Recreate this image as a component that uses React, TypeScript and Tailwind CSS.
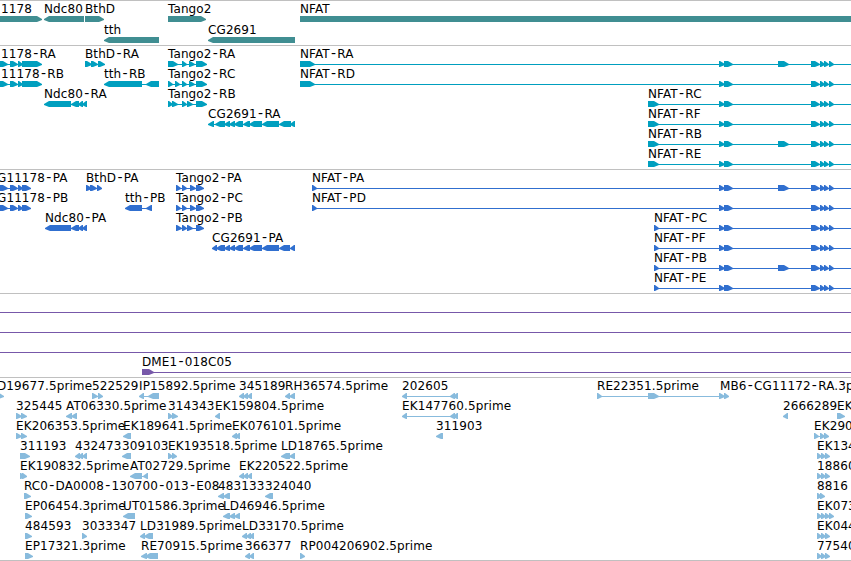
type Strand = "f" | "r";
type Seg = [number, number];

type Feature = {
    row: number,
    strand?: Strand,
    label?: string,
    x: number,
    segs?: Seg[],
    // connecting intron line, from / to
    line?: Seg,
};

const WIDTH = 851;

const nfat: Seg[] = [[719, 725], [724, 733], [811, 820], [820, 825], [824, 829], [829, 834]];
const nfatLong: Seg[] = [...nfat, [778, 789]];
const triple: Seg[] = [[817, 822], [821, 826], [825, 830]];

const genes: Feature[] = [
    { row: 0, label: "1178", x: 1, segs: [[-20, 42]] },
    { row: 0, strand: "r", label: "Ndc80", x: 44, segs: [[44, 84]] },
    { row: 0, label: "BthD", x: 85, segs: [[85, 104]] },
    { row: 1, strand: "r", label: "tth", x: 104, segs: [[104, 159]] },
    { row: 0, label: "Tango2", x: 168, segs: [[168, 206]] },
    { row: 1, strand: "r", label: "CG2691", x: 208, segs: [[208, 295]] },
    { row: 0, label: "NFAT", x: 300, segs: [[300, 870]] },
];

const transcripts: Feature[] = [
    { row: 0, label: "1178-RA", x: 1, segs: [[-4, 8], [10, 18], [18, 23], [22, 42]], line: [0, 42] },
    { row: 1, label: "11178-RB", x: 1, segs: [[-4, 8], [10, 18], [18, 23], [22, 42]], line: [0, 42] },
    { row: 2, strand: "r", label: "Ndc80-RA", x: 44, segs: [[44, 71], [71, 79], [78, 83], [82, 87]] },
    { row: 0, label: "BthD-RA", x: 85, segs: [[85, 92], [91, 98], [98, 105]], line: [85, 105] },
    { row: 1, strand: "r", label: "tth-RB", x: 104, segs: [[104, 142], [146, 159]], line: [104, 159] },
    { row: 0, label: "Tango2-RA", x: 168, segs: [[168, 178], [182, 187], [189, 195], [196, 207]], line: [168, 207] },
    { row: 1, label: "Tango2-RC", x: 168, segs: [[168, 173], [175, 180], [182, 187], [189, 195], [196, 207]], line: [168, 207] },
    { row: 2, label: "Tango2-RB", x: 168, segs: [[168, 173], [172, 178], [182, 187], [187, 193], [196, 207]], line: [168, 207] },
    { row: 3, strand: "r", label: "CG2691-RA", x: 208, segs: [[208, 214], [215, 225], [224, 230], [229, 235], [234, 243], [243, 250], [249, 262], [262, 279], [279, 291], [290, 295]], line: [208, 295] },
    { row: 0, label: "NFAT-RA", x: 300, segs: [[300, 315], ...nfatLong], line: [300, WIDTH] },
    { row: 1, label: "NFAT-RD", x: 300, segs: [[300, 315], ...nfat], line: [300, WIDTH] },
    { row: 2, label: "NFAT-RC", x: 648, segs: [[648, 659], ...nfat], line: [648, WIDTH] },
    { row: 3, label: "NFAT-RF", x: 648, segs: [[648, 659], ...nfat], line: [648, WIDTH] },
    { row: 4, label: "NFAT-RB", x: 648, segs: [[648, 659], ...nfatLong], line: [648, WIDTH] },
    { row: 5, label: "NFAT-RE", x: 648, segs: [[648, 659], ...nfat], line: [648, WIDTH] },
];

const proteins: Feature[] = [
    { row: 0, label: "G11178-PA", x: -3, segs: [[-4, 8], [10, 18], [18, 23], [22, 31]], line: [0, 31] },
    { row: 1, label: "G11178-PB", x: -3, segs: [[-4, 8], [10, 18], [18, 23], [22, 31]], line: [0, 31] },
    { row: 2, strand: "r", label: "Ndc80-PA", x: 45, segs: [[45, 71], [71, 79], [78, 83], [82, 87]] },
    { row: 0, label: "BthD-PA", x: 86, segs: [[86, 92], [90, 97], [97, 102]], line: [86, 102] },
    { row: 1, strand: "r", label: "tth-PB", x: 125, segs: [[125, 142], [146, 152]], line: [125, 152] },
    { row: 0, label: "Tango2-PA", x: 176, segs: [[176, 181], [182, 187], [190, 196], [196, 204]], line: [176, 204] },
    { row: 1, label: "Tango2-PC", x: 176, segs: [[176, 181], [182, 187], [190, 196], [196, 204]], line: [176, 204] },
    { row: 2, label: "Tango2-PB", x: 176, segs: [[176, 182], [182, 187], [187, 193], [196, 204]], line: [176, 204] },
    { row: 3, strand: "r", label: "CG2691-PA", x: 212, segs: [[212, 217], [216, 225], [224, 230], [229, 235], [234, 243], [243, 250], [249, 262], [262, 279], [279, 290], [290, 295]], line: [212, 295] },
    { row: 0, label: "NFAT-PA", x: 312, segs: [[312, 317], ...nfatLong], line: [312, WIDTH] },
    { row: 1, label: "NFAT-PD", x: 312, segs: [[312, 317], ...nfat], line: [312, WIDTH] },
    { row: 2, label: "NFAT-PC", x: 654, segs: [[654, 659], ...nfat], line: [654, WIDTH] },
    { row: 3, label: "NFAT-PF", x: 654, segs: [[654, 659], ...nfat], line: [654, WIDTH] },
    { row: 4, label: "NFAT-PB", x: 654, segs: [[654, 659], ...nfatLong], line: [654, WIDTH] },
    { row: 5, label: "NFAT-PE", x: 654, segs: [[654, 659], ...nfat], line: [654, WIDTH] },
];

const clones: Feature[] = [
    { row: 0, x: 0, line: [0, WIDTH] },
    { row: 1, x: 0, line: [0, WIDTH] },
    { row: 2, x: 0, line: [0, WIDTH] },
    { row: 3, label: "DME1-018C05", x: 142, segs: [[142, 154]], line: [142, WIDTH] },
];

const ests: Feature[] = [
    { row: 0, label: "D19677.5prime", x: -3, segs: [[-2, 4]] },
    { row: 0, label: "522529", x: 92, segs: [[92, 98], [98, 103]], line: [92, 103] },
    { row: 0, strand: "r", label: "IP15892.5prime", x: 139, segs: [[139, 144], [148, 159]], line: [139, 159] },
    { row: 0, strand: "r", label: "345189", x: 239, segs: [[239, 244], [243, 248], [247, 252]] },
    { row: 0, strand: "r", label: "RH36574.5prime", x: 285, segs: [[285, 290], [289, 295]] },
    { row: 0, strand: "r", label: "202605", x: 402, segs: [[402, 407], [450, 455], [453, 458]], line: [402, 458] },
    { row: 0, label: "RE22351.5prime", x: 597, segs: [[597, 602], [648, 659], [719, 725], [724, 729]], line: [597, 729] },
    { row: 0, label: "MB6-CG11172-RA.3prime", x: 720 },
    { row: 1, label: "325445", x: 16, segs: [[16, 22], [21, 27]] },
    { row: 1, strand: "r", label: "AT06330.5prime", x: 66, segs: [[66, 72], [71, 77]] },
    { row: 1, label: "314343", x: 168, segs: [[168, 173], [172, 178]] },
    { row: 1, strand: "r", label: "EK159804.5prime", x: 215, segs: [[215, 220]] },
    { row: 1, strand: "r", label: "EK147760.5prime", x: 402, segs: [[402, 407], [450, 455], [453, 458]], line: [402, 458] },
    { row: 1, strand: "r", label: "2666289", x: 783, segs: [[783, 788]] },
    { row: 1, label: "EK", x: 837, segs: [[837, 845]] },
    { row: 2, label: "EK206353.5prime", x: 16, segs: [[16, 22], [21, 27]] },
    { row: 2, strand: "r", label: "EK189641.5prime", x: 123, segs: [[123, 131]] },
    { row: 2, strand: "r", label: "EK076101.5prime", x: 232, segs: [[232, 237], [235, 240]] },
    { row: 2, strand: "r", label: "311903", x: 436, segs: [[436, 443]] },
    { row: 2, label: "EK290", x: 814, segs: [[814, 819], [820, 825], [824, 829]], line: [814, 829] },
    { row: 3, label: "311193", x: 20, segs: [[20, 30]] },
    { row: 3, strand: "r", label: "432473", x: 75, segs: [[75, 80], [78, 83], [82, 87]] },
    { row: 3, strand: "r", label: "309103", x: 122, segs: [[122, 131]] },
    { row: 3, label: "EK193518.5prime", x: 168, segs: [[168, 173], [172, 177]] },
    { row: 3, strand: "r", label: "LD18765.5prime", x: 281, segs: [[281, 290], [289, 295]] },
    { row: 3, label: "EK134", x: 817, segs: triple },
    { row: 4, label: "EK190832.5prime", x: 20, segs: [[20, 25], [22, 27]] },
    { row: 4, strand: "r", label: "AT02729.5prime", x: 130, segs: [[130, 142], [143, 148]], line: [130, 148] },
    { row: 4, strand: "r", label: "EK220522.5prime", x: 239, segs: [[239, 244], [243, 248], [247, 252]] },
    { row: 4, label: "18860", x: 817, segs: triple },
    { row: 5, label: "RC0-DA0008-130700-013-E08", x: 24, segs: [[24, 31]] },
    { row: 5, strand: "r", label: "483133", x: 218, segs: [[218, 224], [223, 230]] },
    { row: 5, strand: "r", label: "324040", x: 265, segs: [[265, 273]] },
    { row: 5, label: "8816", x: 817, segs: [[817, 822], [820, 825]] },
    { row: 6, label: "EP06454.3prime", x: 25, segs: [[25, 32]] },
    { row: 6, strand: "r", label: "UT01586.3prime", x: 123, segs: [[123, 135]] },
    { row: 6, strand: "r", label: "LD46946.5prime", x: 223, segs: [[223, 230], [229, 235], [234, 240]] },
    { row: 6, label: "EK073", x: 817, segs: [...triple, [829, 834]] },
    { row: 7, label: "484593", x: 25, segs: [[25, 32]] },
    { row: 7, label: "3033347", x: 82, segs: [[82, 87]] },
    { row: 7, strand: "r", label: "LD31989.5prime", x: 140, segs: [[140, 145], [144, 153]] },
    { row: 7, strand: "r", label: "LD33170.5prime", x: 242, segs: [[242, 247], [246, 251], [249, 254]] },
    { row: 7, label: "EK044", x: 817, segs: triple },
    { row: 8, label: "EP17321.3prime", x: 25, segs: [[25, 33]] },
    { row: 8, strand: "r", label: "RE70915.5prime", x: 141, segs: [[141, 147], [145, 158]] },
    { row: 8, strand: "r", label: "366377", x: 245, segs: [[245, 250], [249, 254]] },
    { row: 8, label: "RP004206902.5prime", x: 300, segs: [[300, 305]] },
    { row: 8, label: "77540", x: 817, segs: triple },
];

function arrow([a, b]: Seg, y: number, strand: Strand) {
    const head = Math.min(5, b - a - 1);
    if (strand === "f") {
        return `M${a} ${y}H${b - head}L${b} ${y + 3}V${y + 4}L${b - head} ${y + 6}H${a}Z`;
    }
    return `M${b} ${y}H${a + head}L${a} ${y + 3}V${y + 4}L${a + head} ${y + 6}H${b}Z`;
}

// hyphens are drawn wider than the font's own
function Label({ text, x, y }: { text: string, x: number, y: number }) {
    return (
        <text x={x} y={y} className="fill-black text-[12px] tracking-[0.1px]">
            {text.split(/(-)/).map((part, i) => (
                <tspan key={i} dx={i > 0 ? 1.2 : 0} className={part === "-" ? "text-[14px]" : "text-[12px]"}>{part}</tspan>
            ))}
        </text>
    );
}

function Track({
    features,
    height,
    color,
    pitch = 20,
}: {
    features: Feature[],
    height: number,
    color: string,
    pitch?: number,
}) {
    return (
        <section className="border-t border-[#c0c0c0]">
            <svg width={WIDTH} height={height} className={`block ${color}`}>
                {features.map((item, i) => {
                    const top = item.row * pitch;
                    return (
                        <g key={i}>
                            {item.line && (
                                <rect x={item.line[0]} y={top + 18} width={item.line[1] - item.line[0]} height={1} fill="currentColor" />
                            )}
                            {item.segs?.map((seg, j) => (
                                <path key={j} d={arrow(seg, top + 15, item.strand ?? "f")} fill="currentColor" />
                            ))}
                            {item.label && <Label text={item.label} x={item.x} y={top + 12} />}
                        </g>
                    );
                })}
            </svg>
        </section>
    );
}

export default function App() {
    return (
        <main className="flex h-[561px] w-[851px] flex-col overflow-hidden border-b border-[#c0c0c0] bg-white font-['DejaVu_Sans',sans-serif]">
            <Track features={genes} height={44} pitch={21} color="text-[#408e92]" />
            <Track features={transcripts} height={123} color="text-[#009fbf]" />
            <Track features={proteins} height={123} color="text-[#306fcf]" />
            <Track features={clones} height={83} color="text-[#7758a9]" />
            <Track features={ests} height={182} color="text-[#88bbdd]" />
        </main>
    );
};
